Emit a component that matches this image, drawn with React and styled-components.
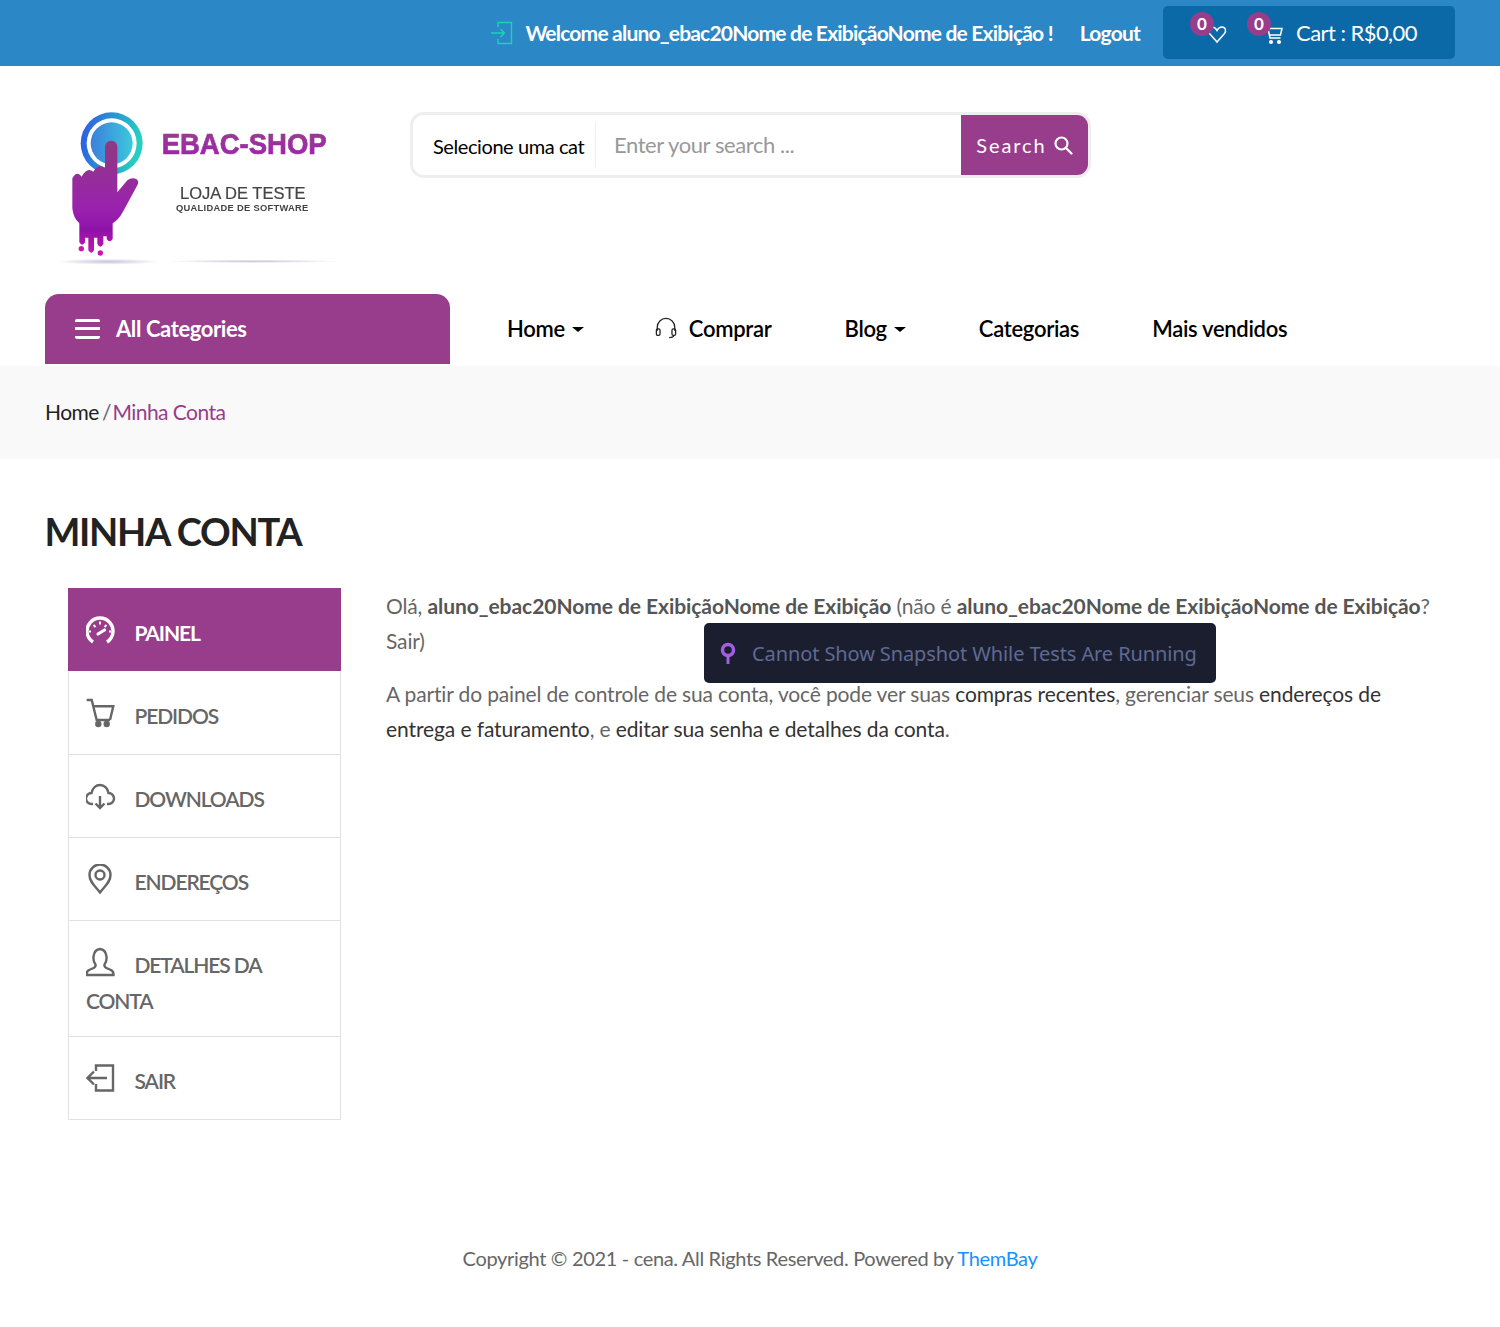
import React from "react";
import styled, { createGlobalStyle } from "styled-components";

const PURPLE = "#973d8b";

const GlobalStyle = createGlobalStyle`
  * { box-sizing: border-box; }
  html, body { margin: 0; padding: 0; background: #fff; }
  body { font-family: "Lato", "Liberation Sans", sans-serif; color: #666; }
  a { text-decoration: none; color: inherit; }
`;

const Page = styled.div`
  position: relative;
  width: 1500px;
  height: 1327px;
  overflow: hidden;
`;

const TopBar = styled.div`
  display: flex;
  justify-content: flex-end;
  align-items: center;
  height: 66px;
  padding: 0 45px 1px;
  background-color: #2b87c5;
  color: #fff;
`;

const Welcome = styled.div`
  display: flex;
  align-items: center;
  gap: 11px;
  font-size: 21px;
  font-weight: 700;
  letter-spacing: -0.8px;
`;

const Logout = styled.a`
  margin-left: 27px;
  font-size: 21px;
  font-weight: 700;
  letter-spacing: -0.79px;
`;

const CartBox = styled.div`
  display: flex;
  align-items: center;
  width: 292px;
  height: 53px;
  margin-left: 23px;
  padding-left: 44px;
  border-radius: 5px;
  background-color: #0c69a8;
`;

const CartIconWrap = styled.span`
  position: relative;
  display: flex;
  width: 20px;
  height: 22px;
  margin-top: 2px;
  margin-right: ${(p) => p.$gap}px;
`;

const Badge = styled.span`
  position: absolute;
  left: -17px;
  top: -11px;
  width: 24px;
  height: 24px;
  border-radius: 50%;
  background-color: ${PURPLE};
  color: #fff;
  font-size: 17px;
  font-weight: 700;
  line-height: 23px;
  text-align: center;
`;

const CartText = styled.span`
  font-size: 22px;
  letter-spacing: -0.55px;
`;

const Header = styled.div`
  display: flex;
  align-items: flex-start;
  padding: 34px 0 24px 45px;
  height: 228px;
`;

const Logo = styled.svg`
  display: block;
  width: 305px;
  height: 170px;
  flex: none;
  filter: blur(0.35px);
`;

const SearchForm = styled.div`
  display: flex;
  width: 681px;
  height: 66px;
  margin: 12px 0 0 60px;
  border: 3px solid #eeeeee;
  border-radius: 14px;
  overflow: hidden;
`;

const CategorySelect = styled.div`
  display: flex;
  align-items: center;
  width: 183px;
  height: 46px;
  margin-top: 7px;
  padding: 2px 0 0 20px;
  border-right: 1px solid #eeeeee;
  color: #000;
  font-size: 20px;
  letter-spacing: -0.42px;
  white-space: nowrap;
`;

const SearchInput = styled.div`
  flex: 1;
  padding: 16px 0 0 18px;
  color: #999;
  font-size: 22px;
  letter-spacing: -0.42px;
`;

const SearchButton = styled.button`
  display: flex;
  align-items: center;
  justify-content: center;
  gap: 6px;
  width: 127px;
  padding: 0 0 1px;
  border: 0;
  background-color: ${PURPLE};
  color: #fff;
  font-family: inherit;
  font-size: 20px;
  letter-spacing: 1.9px;
`;

const NavRow = styled.div`
  display: flex;
  height: 70px;
  margin-bottom: 2px;
  padding-left: 45px;
`;

const AllCategories = styled.div`
  display: flex;
  align-items: center;
  gap: 16px;
  width: 405px;
  padding: 0 0 1px 30px;
  border-radius: 14px 14px 0 0;
  background-color: ${PURPLE};
  color: #fff;
  font-size: 22px;
  font-weight: 700;
  letter-spacing: -0.4px;
`;

const Burger = styled.span`
  display: block;
  width: 25px;
  height: 20px;
  border-top: 3px solid #fff;
  border-bottom: 3px solid #fff;
  border-radius: 2px;
  background: linear-gradient(#fff, #fff) center / 100% 3px no-repeat;
`;

const Nav = styled.nav`
  display: flex;
  align-items: center;
  padding-bottom: 2px;
  margin-left: 20.5px;
`;

const NavItem = styled.a`
  display: flex;
  align-items: center;
  gap: ${(p) => p.$gap || 0}px;
  padding: 0 36.5px;
  color: #000;
  font-size: 22px;
  font-weight: 600;
  letter-spacing: -0.3px;
  white-space: nowrap;

  svg {
    margin-left: -2px;
  }
`;

const Caret = styled.span`
  width: 0;
  height: 0;
  margin: 3px 0 0 7px;
  border-style: solid;
  border-width: 5px 6px 0;
  border-color: #000 transparent transparent;
`;

const Breadcrumb = styled.div`
  display: flex;
  align-items: center;
  height: 93px;
  padding: 0 0 2px 45px;
  background-color: #f9f9f9;
  color: #222;
  font-size: 21px;
  letter-spacing: -0.55px;
  white-space: pre;
`;

const Sep = styled.span`
  color: #666;
  letter-spacing: -2.2px;
`;

const Current = styled.span`
  color: ${PURPLE};
`;

const Title = styled.h1`
  margin: 49px 0 0 44.5px;
  color: #222;
  font-size: 38px;
  line-height: 46px;
  font-weight: 700;
  letter-spacing: -1.3px;
`;

const Account = styled.div`
  display: flex;
  margin-top: 34px;
  padding-left: 68px;
`;

const Sidebar = styled.ul`
  width: 273px;
  flex: none;
  margin: 0;
  padding: 0;
  list-style: none;
`;

const SideItem = styled.li`
  min-height: 83px;
  padding: 26px 17px 17px;
  border: 1px solid #e1e1e1;
  border-top: 0;
  background-color: ${(p) => (p.$active ? PURPLE : "#fff")};
  border-color: ${(p) => (p.$active ? PURPLE : "#e1e1e1")};
  color: ${(p) => (p.$active ? "#fff" : "#666")};
  font-size: 21px;
  font-weight: ${(p) => (p.$active ? 700 : 600)};
  line-height: 36px;
  letter-spacing: -1.1px;

  &:first-child,
  &:nth-child(2) {
    padding-top: 27px;
  }

  &:nth-child(2) {
    min-height: 84px;
  }
`;

const SideIcon = styled.svg`
  display: inline-block;
  width: 30px;
  height: 30px;
  margin: -10px 18.5px -10px 0;
  vertical-align: 6px;
`;

const Content = styled.div`
  width: 1060px;
  margin-left: 45px;
  color: #666;
  font-size: 21px;
  line-height: 35px;
  letter-spacing: -0.15px;
`;

const Para = styled.p`
  margin: 0 0 18px;
  strong { font-weight: 700; color: #555; letter-spacing: -0.06px; }
`;

const Dark = styled.span`
  color: #333;
  letter-spacing: -0.1px;
`;

const Footer = styled.div`
  margin-top: 123px;
  color: #666;
  font-size: 20px;
  letter-spacing: -0.33px;
  line-height: 30px;
  text-align: center;
  a { color: #1890ff; }
`;

const SnapshotToast = styled.div`
  position: absolute;
  left: 704px;
  top: 623px;
  display: flex;
  align-items: center;
  gap: 16px;
  width: 512px;
  height: 60px;
  padding-left: 16px;
  border-radius: 5px;
  background-color: #1b1e2e;
  color: #5f6a94;
  font-family: "Noto Sans", "Open Sans", sans-serif;
  font-size: 20px;
  letter-spacing: -0.1px;
  white-space: nowrap;
`;

const IconLogin = () => (
  <svg width="24" height="24" viewBox="0 0 24 24" fill="none" stroke="#17d6b4" strokeWidth="1.4">
    <path d="M8 6V1.500h13.500v21H8V18" />
    <path d="M1 12h13M10.500 8l4 4-4 4" />
  </svg>
);

const IconHeart = () => (
  <svg width="20" height="22" viewBox="0 0 20 22" fill="none" stroke="#fff" strokeWidth="1.5">
    <path d="M10 19L2.500 10.500C.5 8 1.500 4 5 4c2.300 0 4 1.500 5 3.500C11 5.500 12.700 4 15 4c3.500 0 4.500 4 2.500 6.500z" />
  </svg>
);

const IconCart = () => (
  <svg width="20" height="22" viewBox="0 0 20 22" fill="none" stroke="#fff" strokeWidth="1.5">
    <path d="M0 3h3.500l2.500 12h10.500M4.500 5.500H18l-1.500 6.500H5.500" />
    <circle cx="7" cy="19" r="1.300" fill="#fff" />
    <circle cx="15" cy="19" r="1.300" fill="#fff" />
  </svg>
);

const IconSearch = () => (
  <svg width="20" height="20" viewBox="0 0 20 20" fill="none" stroke="#fff" strokeWidth="2.2">
    <circle cx="8.500" cy="8.500" r="6" />
    <path d="M13 13l5.500 5.500" strokeLinecap="round" />
  </svg>
);

const IconHeadset = () => (
  <svg width="22" height="22" viewBox="0 0 24 24" fill="none" stroke="#222" strokeWidth="1.4">
    <path d="M2.500 15v-4a9.500 9.500 0 0 1 19 0v4" />
    <rect x="1.500" y="13" width="4" height="7" rx="1.500" />
    <rect x="18.500" y="13" width="4" height="7" rx="1.500" />
    <path d="M20.500 20c0 1.500-2 2.500-5 2.500" />
  </svg>
);

const sideIcons = {
  gauge: (
    <g transform="translate(-1 1.500)">
      <path d="M8 25.500A13 13 0 1 1 22 25.500" strokeWidth="3.400" />
      <path d="M13 17.500l6.500-4" strokeWidth="3.200" strokeLinecap="round" />
      <path d="M15 5v3M6 15H4M26 15h-2M8.500 8.500l2 2M21.500 8.500l-2 2" strokeWidth="2" />
    </g>
  ),
  cart: (
    <>
      <path d="M.7 2h5l5 20H24" />
      <path d="M7.300 8.300h20L24 22" />
      <circle cx="12.300" cy="26" r="2" fill="currentColor" />
      <circle cx="20.700" cy="26" r="2" fill="currentColor" />
    </>
  ),
  cloud: (
    <g transform="translate(-1 1)">
      <path d="M8 22H6.500C3.500 22 1 19.500 1 16.500S3.500 11 6.500 11C7.500 6 11 3 15 3c4.500 0 8 3.500 8.500 8 3 0 5.500 2.500 5.500 5.500S26.500 22 23.500 22H22" />
      <path d="M15 14v12M10.500 21.500L15 26l4.500-4.500" />
    </g>
  ),
  pin: (
    <g transform="translate(-1 0)">
      <path d="M15 28.500C10 22 4.500 18 4.500 11a10.500 10.500 0 0 1 21 0c0 7-5.500 11-10.500 17.500z" />
      <circle cx="15" cy="11" r="4.500" />
    </g>
  ),
  user: (
    <g transform="translate(-1 0)">
      <path d="M10.500 17.500C7.500 14 7 3 15 2c8 1 7.500 12 4.500 15.500-.5 2 .5 3 3 4 4 1.500 6 2.500 6 5.500v1H1.500v-1c0-3 2-4 6-5.500 2.500-1 3.500-2 3-4z" />
    </g>
  ),
  logout: (
    <>
      <path d="M10 8V2.500h17v25H10V21" />
      <path d="M21 15H2M8 8.500L1.500 15 8 21.500" />
    </>
  ),
};

const SideLink = ({ icon, active, children }) => (
  <SideItem $active={active}>
    <SideIcon viewBox="0 0 30 30" fill="none" stroke="currentColor" strokeWidth="2.400">
      {sideIcons[icon]}
    </SideIcon>
    {children}
  </SideItem>
);

const App = () => (
  <Page>
    <GlobalStyle />
    <TopBar>
      <Welcome>
        <IconLogin />
        <span>Welcome aluno_ebac20Nome de ExibiçãoNome de Exibição !</span>
      </Welcome>
      <Logout>Logout</Logout>
      <CartBox>
        <CartIconWrap $gap={37}>
          <Badge>0</Badge>
          <IconHeart />
        </CartIconWrap>
        <CartIconWrap $gap={12}>
          <Badge>0</Badge>
          <IconCart />
        </CartIconWrap>
        <CartText>Cart : R$0,00</CartText>
      </CartBox>
    </TopBar>

    <Header>
      <Logo viewBox="15 15 915 510">
        <defs>
          <linearGradient id="ring" x1="0" y1="0" x2="1" y2="0.2">
            <stop offset="0" stopColor="#2f55e6" />
            <stop offset="1" stopColor="#26cfc0" />
          </linearGradient>
          <linearGradient id="core" x1="0" y1="0" x2="1" y2="0">
            <stop offset="0" stopColor="#3c7fdc" />
            <stop offset="1" stopColor="#3bc9dc" />
          </linearGradient>
          <linearGradient id="hand" x1="0" y1="0" x2="0" y2="1">
            <stop offset="0" stopColor="#8f3a80" />
            <stop offset="0.6" stopColor="#9a22ae" />
            <stop offset="0.8" stopColor="#8e12a8" />
            <stop offset="1" stopColor="#cc14b0" />
          </linearGradient>
          <linearGradient id="brand" x1="0" y1="0" x2="0" y2="1">
            <stop offset="0" stopColor="#96408a" />
            <stop offset="1" stopColor="#a01fb5" />
          </linearGradient>
          <radialGradient id="shade">
            <stop offset="0" stopColor="#b9b6cf" stopOpacity="0.8" />
            <stop offset="1" stopColor="#b9b6cf" stopOpacity="0" />
          </radialGradient>
        </defs>
        <circle cx="215" cy="145" r="93" fill="url(#ring)" />
        <circle cx="215" cy="145" r="75" fill="#fff" />
        <circle cx="215" cy="145" r="63" fill="url(#core)" />
        <path
          fill="url(#hand)"
          d="M195 155a18.500 18 0 0 1 37 0V292L262 256q14-10 28-3q8 6 2 18L248 352q-12 22-30 33V432q-9 14-18 0V424H190V447q-9 16-18 0V428H162V466q-8 14-17 0V428H135V442q-8 14-17 0V385Q100 370 97 340V250q14-24 28-5q16-30 35-15q16-28 35-10z"
        />
        <circle cx="124" cy="461" r="8" fill="#cc14b0" />
        <circle cx="181" cy="474" r="8" fill="#cc14b0" />
        <text x="365" y="178" fontFamily="Liberation Sans" fontWeight="700" fontSize="86" textLength="495" lengthAdjust="spacingAndGlyphs" fill="url(#brand)" stroke="url(#brand)" strokeWidth="2">
          EBAC-SHOP
        </text>
        <text x="420" y="312" fontFamily="Liberation Sans" fontSize="47" textLength="377" lengthAdjust="spacingAndGlyphs" fill="#444" stroke="#444" strokeWidth="0.6">
          LOJA DE TESTE
        </text>
        <text x="408" y="348" fontFamily="Liberation Sans" fontWeight="700" fontSize="28" textLength="397" fill="#444">
          QUALIDADE DE SOFTWARE
        </text>
        <ellipse cx="205" cy="500" rx="155" ry="9" fill="url(#shade)" />
        <ellipse cx="640" cy="499" rx="265" ry="5" fill="url(#shade)" />
      </Logo>
      <SearchForm>
        <CategorySelect>Selecione uma cat</CategorySelect>
        <SearchInput>Enter your search ...</SearchInput>
        <SearchButton>
          Search
          <IconSearch />
        </SearchButton>
      </SearchForm>
    </Header>

    <NavRow>
      <AllCategories>
        <Burger />
        All Categories
      </AllCategories>
      <Nav>
        <NavItem>Home<Caret /></NavItem>
        <NavItem $gap={12}><IconHeadset />Comprar</NavItem>
        <NavItem>Blog<Caret /></NavItem>
        <NavItem>Categorias</NavItem>
        <NavItem>Mais vendidos</NavItem>
      </Nav>
    </NavRow>

    <Breadcrumb>
      Home<Sep> / </Sep><Current>Minha Conta</Current>
    </Breadcrumb>

    <Title>MINHA CONTA</Title>

    <Account>
      <Sidebar>
        <SideLink icon="gauge" active>PAINEL</SideLink>
        <SideLink icon="cart">PEDIDOS</SideLink>
        <SideLink icon="cloud">DOWNLOADS</SideLink>
        <SideLink icon="pin">ENDEREÇOS</SideLink>
        <SideLink icon="user">DETALHES DA CONTA</SideLink>
        <SideLink icon="logout">SAIR</SideLink>
      </Sidebar>
      <Content>
        <Para>
          Olá, <strong>aluno_ebac20Nome de ExibiçãoNome de Exibição</strong> (não é <strong>aluno_ebac20Nome de ExibiçãoNome de Exibição</strong>? Sair)
        </Para>
        <Para>
          A partir do painel de controle de sua conta, você pode ver suas <Dark>compras recentes</Dark>, gerenciar seus <Dark>endereços de entrega e faturamento</Dark>, e <Dark>editar sua senha e detalhes da conta</Dark>.
        </Para>
      </Content>
    </Account>

    <Footer>
      Copyright © 2021 - cena. All Rights Reserved. Powered by <a>ThemBay</a>
    </Footer>

    <SnapshotToast>
      <svg width="16" height="22" viewBox="0 0 16 22" fill="none">
        <circle cx="8" cy="8" r="5.500" stroke="#a35fe0" strokeWidth="3.500" fill="#1b1e2e" />
        <path d="M8 14v7" stroke="#a35fe0" strokeWidth="3" strokeLinecap="round" />
      </svg>
      Cannot Show Snapshot While Tests Are Running
    </SnapshotToast>
  </Page>
);

export default App;
